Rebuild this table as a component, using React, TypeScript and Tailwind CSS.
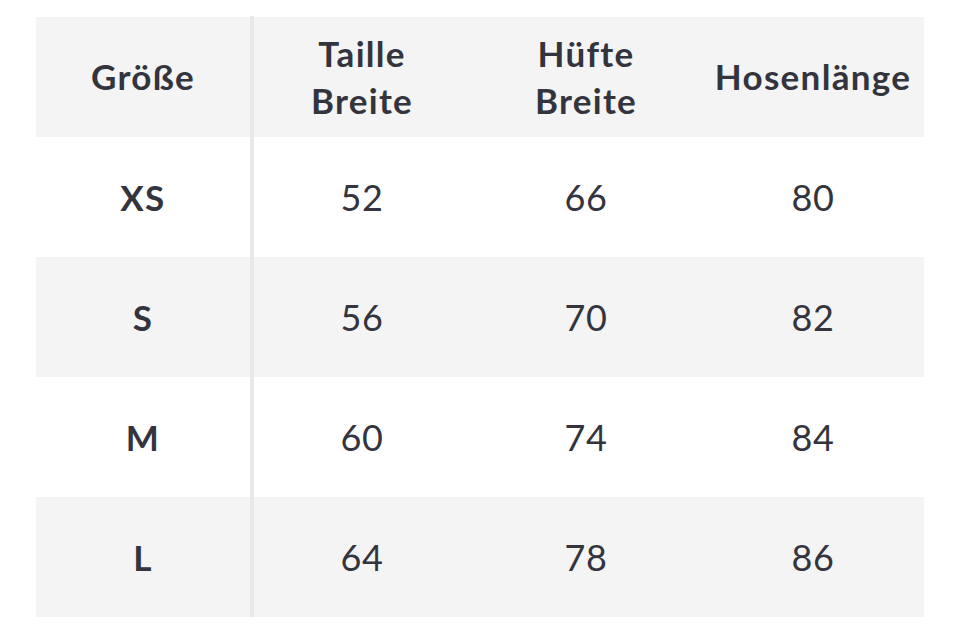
const header = ["Taille\nBreite", "Hüfte\nBreite", "Hosenlänge"];

const rows = [
  { size: "XS", values: ["52", "66", "80"] },
  { size: "S", values: ["56", "70", "82"] },
  { size: "M", values: ["60", "74", "84"] },
  { size: "L", values: ["64", "78", "86"] },
];

const cols = "grid grid-cols-[218px_216px_232px_222px]";

export default function App() {
  return (
    <div className="w-[960px] h-[636px] bg-white pt-[17px] pl-[36px] font-['Lato','Noto_Sans',sans-serif] text-[#33343e]">
      <div className="w-[888px]">
        {/* Header */}
        <div className={`${cols} h-[120px] bg-[#f4f4f4]`}>
          <div className="flex items-center justify-center border-r-4 border-[#e9e9e9] text-[35px] font-bold tracking-[1.3px] -mt-px">
            Größe
          </div>
          {header.map((h) => (
            <div
              key={h}
              className="flex items-center justify-center text-center whitespace-pre-line text-[35px] font-bold tracking-[1.3px] leading-[47px] -mt-px"
            >
              {h}
            </div>
          ))}
        </div>

        {/* Rows */}
        {rows.map((row, i) => (
          <div
            key={row.size}
            className={`${cols} h-[120px] ${i % 2 === 1 ? "bg-[#f4f4f4]" : "bg-white"}`}
          >
            <div className="flex items-center justify-center border-r-4 border-[#e9e9e9] text-[35px] font-bold tracking-[1.5px] pt-px">
              {row.size}
            </div>
            {row.values.map((v, j) => (
              <div key={j} className="flex items-center justify-center text-[36px] tracking-[0.5px]">
                {v}
              </div>
            ))}
          </div>
        ))}
      </div>
    </div>
  );
}
